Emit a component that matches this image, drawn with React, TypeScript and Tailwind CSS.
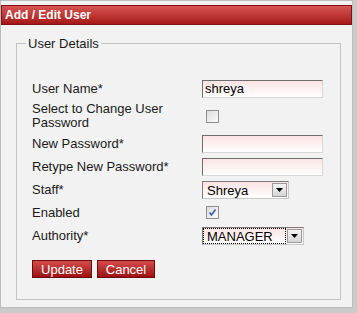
import { ReactNode } from "react";

const TextBox = ({ value = "" }: { value?: string }) => (
  <div className="h-[18px] w-[121px] border border-t-[#6e6e6e] border-l-[#6e6e6e] border-r-[#d8d8d8] border-b-[#d8d8d8] bg-gradient-to-b from-[#fbe3e3] to-white pl-[2px] text-[13px] leading-[16px] text-black">
    {value}
  </div>
);

const CheckBox = ({ checked = false }: { checked?: boolean }) => (
  <div className="ml-[4px] flex h-[13px] w-[13px] items-center justify-center border border-[#8e8f8f] bg-gradient-to-br from-[#dcdcdc] to-[#fbfbfb]">
    {checked && (
      <svg width="9" height="9" viewBox="0 0 9 9">
        <path d="M1.5 4.5 L3.5 7 L7.5 1.5" fill="none" stroke="#3a5fa8" strokeWidth="1.6" />
      </svg>
    )}
  </div>
);

const DropDown = ({
  value,
  width,
  focused = false,
}: {
  value: string;
  width: string;
  focused?: boolean;
}) => (
  <div
    className={`flex h-[18px] ${width} items-stretch border border-t-[#7a7a7a] border-l-[#7a7a7a] border-r-[#c8c8c8] border-b-[#c8c8c8] bg-gradient-to-b from-[#fbe3e3] to-white`}
  >
    <div
      className={`flex-1 pl-[3px] text-[13px] leading-[15px] text-black ${
        focused ? "border border-dotted border-black" : "border border-transparent"
      }`}
    >
      {value}
    </div>
    <div className="m-px flex w-[15px] items-center justify-center border border-[#9a9a9a] bg-gradient-to-b from-[#f4f4f4] to-[#d6d6d6]">
      <svg width="7" height="4" viewBox="0 0 7 4">
        <path d="M0 0 H7 L3.5 4 Z" fill="#000" />
      </svg>
    </div>
  </div>
);

const Row = ({
  label,
  height = "h-[23px]",
  children,
}: {
  label: ReactNode;
  height?: string;
  children: ReactNode;
}) => (
  <div className={`flex ${height} items-center`}>
    <div className="w-[170px] text-[13px] leading-[14px] text-[#1a1a1a]">{label}</div>
    {children}
  </div>
);

const RedButton = ({ children, width }: { children: ReactNode; width: string }) => (
  <button
    className={`h-[18px] ${width} border border-[#6e0a0a] bg-gradient-to-b from-[#d44a4a] to-[#9c1010] text-[13px] leading-[15px] text-white`}
  >
    {children}
  </button>
);

export default function App() {
  return (
    <div className="h-[313px] w-[357px] bg-[#cbcbcb] font-['Liberation_Sans',Arial,sans-serif]">
      <div className="h-[308px] w-[353px] border border-[#bdbdbd] bg-[#f2f2f2] pt-[4px]">
        <div className="h-[20px] border border-[#851010] bg-gradient-to-b from-[#d65454] to-[#a51616] pl-[3px] text-[12px] font-bold leading-[18px] text-white">
          Add / Edit User
        </div>

        <fieldset className="ml-[15px] mt-[11px] w-[325px] border border-[#c3c3c3] pb-[21px] pl-[9px]">
          <legend className="px-[2px] text-[13px] leading-[15px] text-[#1a1a1a]">User Details</legend>

          <div className="pl-[6px] pt-[26px]">
            <Row label="User Name*">
              <TextBox value="shreya" />
            </Row>
            <Row label="Select to Change User Password" height="h-[32px]">
              <CheckBox />
            </Row>
            <Row label="New Password*">
              <TextBox />
            </Row>
            <Row label="Retype New Password*">
              <TextBox />
            </Row>
            <Row label="Staff*">
              <DropDown value="Shreya" width="w-[87px]" />
            </Row>
            <Row label="Enabled">
              <CheckBox checked />
            </Row>
            <Row label="Authority*">
              <DropDown value="MANAGER" width="w-[102px]" focused />
            </Row>

            <div className="mt-[13px] flex gap-[5px]">
              <RedButton width="w-[60px]">Update</RedButton>
              <RedButton width="w-[58px]">Cancel</RedButton>
            </div>
          </div>
        </fieldset>
      </div>
    </div>
  );
}
